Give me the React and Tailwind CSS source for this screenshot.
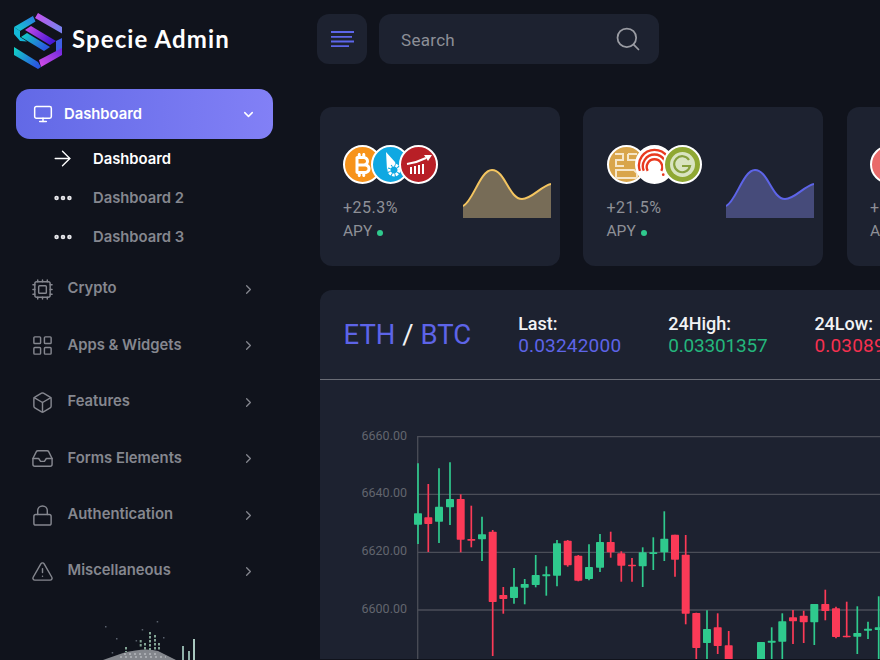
import React from 'react';
import {
  Monitor, ChevronDown, ChevronRight, ArrowRight, Ellipsis, Cpu, LayoutGrid, Box, Inbox, Lock, TriangleAlert, Search,
} from 'lucide-react';
import { FaBitcoinSign } from 'react-icons/fa6';

const UP = '#2fc98d';
const DOWN = '#fb3a57';

// x, wick top, wick bottom, body top, body bottom, up?  (page coordinates)
const candles = [
  [418, 464.3, 545, 514.3, 525.7, 1], [428.3, 485, 553, 518.3, 525, 0], [439, 469.3, 544, 507.7, 522.7, 1],
  [450, 463.3, 526, 500, 508.3, 1], [460.7, 495.3, 553.3, 500, 540.7, 0], [471.3, 506.7, 548.3, 540, 541.7, 0],
  [482, 517.7, 562, 535.3, 540.3, 1], [492.7, 531, 657, 532.7, 603, 0], [503.3, 588, 614.7, 596, 600, 0],
  [514, 569, 604.7, 587.7, 599, 1], [524.7, 580, 605.3, 585, 588.7, 1], [535.7, 556, 588.3, 576, 586, 1],
  [546.3, 567.3, 596.7, 575.3, 577.3, 1], [557, 541, 587.3, 544.3, 576.7, 1], [567.7, 541, 567.7, 541.7, 566.3, 0],
  [578.3, 556, 582.3, 556.7, 581.7, 0], [589, 545.3, 581.3, 568, 580, 1], [600, 535, 573, 543, 568.7, 1],
  [610.7, 532.7, 558.7, 543, 553.3, 0], [621.3, 552.3, 582.7, 554.3, 566.7, 0], [632, 559, 582.7, 565.7, 567.3, 0],
  [642.7, 548.3, 588, 553.3, 567.3, 1], [653.3, 538.3, 571, 553.3, 555, 1], [664.3, 512.3, 562, 539.7, 553.3, 1],
  [675, 535.7, 577.7, 535.7, 560.7, 0], [685.7, 536, 625.3, 555.7, 614.7, 0], [696.3, 613.7, 662, 614, 649, 0],
  [707, 611.3, 662, 630, 644, 1], [717.7, 614.3, 655, 628.3, 647, 0], [728.7, 632, 662, 646.3, 664, 0],
  [761, 643, 664, 643, 664, 1], [771.7, 628.3, 662, 641.7, 643.7, 1], [782.3, 614.3, 660, 622.3, 642.7, 1],
  [793, 611, 645, 618.3, 622.3, 0], [803.7, 611.7, 644, 616.7, 623.3, 0], [814.3, 605, 646, 605, 623.3, 1],
  [825.3, 590.7, 621.3, 605, 612, 0], [836, 607.7, 639.3, 609.3, 638, 0], [846.7, 602.7, 638.3, 636.7, 638.3, 0],
  [857.3, 607.3, 655, 634, 637.7, 1], [868, 622.7, 640, 629.7, 631.7, 1], [878.7, 597.3, 662, 628.3, 631, 1],
];

const gridLines = [[437.7, '6660.00'], [495.3, '6640.00'], [553.3, '6620.00'], [611, '6600.00']];

const menu = [
  { label: 'Crypto', Icon: Cpu },
  { label: 'Apps & Widgets', Icon: LayoutGrid },
  { label: 'Features', Icon: Box },
  { label: 'Forms Elements', Icon: Inbox },
  { label: 'Authentication', Icon: Lock },
  { label: 'Miscellaneous', Icon: TriangleAlert },
];

const Logo = () => (
  <svg width="52" height="60" viewBox="12 11 52 60" className="shrink-0">
    <defs>
      <linearGradient id="lgA" x1="0" y1="0" x2="1" y2="0.4"><stop offset="0" stopColor="#c94fee" /><stop offset="1" stopColor="#7c80ee" /></linearGradient>
      <linearGradient id="lgB" x1="0" y1="1" x2="1" y2="0"><stop offset="0" stopColor="#12d0d0" /><stop offset="1" stopColor="#2f6ae6" /></linearGradient>
      <linearGradient id="lgC" x1="0" y1="0" x2="1" y2="0.5"><stop offset="0" stopColor="#d04fe8" /><stop offset="1" stopColor="#4a18d8" /></linearGradient>
      <linearGradient id="lgD" x1="0" y1="0" x2="1" y2="0.5"><stop offset="0" stopColor="#10d6c4" /><stop offset="1" stopColor="#2a58e0" /></linearGradient>
      <linearGradient id="lgE" x1="0" y1="1" x2="1" y2="0"><stop offset="0" stopColor="#d84fe6" /><stop offset="1" stopColor="#6a28e0" /></linearGradient>
    </defs>
    <polygon points="38,13 62,27 62,33.5 35,18" fill="url(#lgA)" />
    <polygon points="38,13 14,27 20,31 35.5,21.5 33,16" fill="url(#lgB)" />
    <polygon points="14,27 20,31 20,37 27,41.5 20,41 14,34" fill="#14b8d8" />
    <polygon points="25,30 31,26 56,41 50,45" fill="url(#lgC)" />
    <polygon points="21,37 27,33 50,47 44,51" fill="url(#lgD)" />
    <polygon points="56,41 62,38 62,55 56,52" fill="#3f5fe6" />
    <polygon points="62,48 62,55 41,67 39,60" fill="url(#lgE)" />
    <polygon points="14,47 38,62 41,67 38,69 14,55" fill="url(#lgD)" />
  </svg>
);

const Coin = ({ color, first, children }) => (
  <div className={`w-[39px] h-[39px] rounded-full border-2 border-white flex items-center justify-center overflow-hidden shrink-0 ${first ? '' : 'ml-[-11px]'}`} style={{ background: color }}>
    {children}
  </div>
);

const Spark = ({ line, fill }) => (
  <svg width="88" height="50" viewBox="0 0 88 50" className="shrink-0 mt-[24px]">
    <path d="M0 37C10 33 17 1 29 1C42 1 46 30 59 30C69 30 78 17 88 15V49H0Z" fill={fill} />
    <path d="M0 37C10 33 17 1 29 1C42 1 46 30 59 30C69 30 78 17 88 15" fill="none" stroke={line} strokeWidth="2" />
  </svg>
);

const StatCard = ({ coins, change, line, fill }) => (
  <div className="w-[240px] h-[159px] shrink-0 rounded-xl bg-[#1d2230] pl-[23.5px] pr-[9px] pt-[38px] flex justify-between">
    <div>
      <div className="flex">{coins}</div>
      <div className="mt-[13px] text-[16px] leading-[22px] text-[#8e9097] font-['Roboto',sans-serif] tracking-[0.5px]">{change}</div>
      <div className="flex items-center gap-[5px] mt-[1px] text-[15.5px] leading-[22px] text-[#8e9097] font-['Roboto',sans-serif]">
        APY <span className="w-[6px] h-[6px] mt-[3px] rounded-full bg-[#2fc98d]" />
      </div>
    </div>
    {line && <Spark line={line} fill={fill} />}
  </div>
);

const Stat = ({ label, value, color, spacing = 'tracking-[0.2px]' }) => (
  <div className="font-['Roboto',sans-serif] shrink-0">
    <div className="text-[18px] leading-[22px] font-medium text-[#f1f2f4]">{label}</div>
    <div className={`text-[19px] leading-[22px] ${spacing}`} style={{ color }}>{value}</div>
  </div>
);

const Chart = () => (
  <svg width="560" height="279" viewBox="320 381 560 279" className="block">
    {gridLines.map(([y, label]) => (
      <g key={label}>
        <line x1="417.5" x2="880" y1={y} y2={y} stroke="#4b4e58" strokeWidth="1.3" />
        <text x="407" y={y + 3} textAnchor="end" fontSize="12.5" fill="#62656e" fontFamily="Roboto, sans-serif">{label}</text>
      </g>
    ))}
    <line x1="417.7" x2="417.7" y1="437" y2="660" stroke="#4b4e58" strokeWidth="1.3" />
    {candles.map(([x, wt, wb, bt, bb, up]) => {
      const c = up ? UP : DOWN;
      return (
        <g key={x}>
          <line x1={x} x2={x} y1={wt} y2={wb} stroke={c} strokeWidth="1.7" />
          <rect x={x - 4} y={bt} width="8" height={Math.max(bb - bt, 1.6)} rx="0.7" fill={c} />
        </g>
      );
    })}
  </svg>
);

const specks = [[5, 10], [16, 22], [41.7, 13], [35.6, 24], [63, 21], [56.7, 5], [11.7, 36]];
const columns = [[26, 31, 5], [40.7, 24, 8], [45, 27, 7], [50, 16, 18], [55, 19, 15], [59, 27, 7]];

const Art = () => (
  <svg width="110" height="44" viewBox="0 0 110 44" className="block ml-[100px] mt-[16px]">
    {specks.map(([x, y]) => <rect key={x} x={x} y={y} width="1.5" height="1.5" fill="#59606c" />)}
    <path d="M3 44L23 37Q45 31 58 35L70 41L76 44Z" fill="#83868c" />
    <path d="M20 41H66M24 38H58" stroke="#b4b6ba" strokeWidth="1.5" strokeDasharray="2 3" />
    {columns.map(([x, y, h]) => (
      <line key={x} x1={x} x2={x} y1={y} y2={y + h} stroke="#9fc9b2" strokeWidth="2" strokeDasharray="2.5 1.5" opacity="0.8" />
    ))}
    <rect x="82" y="30" width="2" height="14" fill="#8fb0a8" />
    <rect x="88" y="35" width="2" height="9" fill="#8fb0a8" />
    <rect x="93" y="23" width="2" height="21" fill="#a8c8bf" />
  </svg>
);

export default function App() {
  return (
    <div className="w-[880px] h-[660px] overflow-hidden flex bg-[#10131c] font-['Inter',sans-serif]">
      <aside className="w-[300px] shrink-0 overflow-hidden">
        <div className="flex items-center gap-[8px] pl-[12px] pt-[3px] h-[78px]">
          <Logo />
          <span className="text-[24px] leading-none font-bold tracking-[1.1px] text-white font-['Lato',sans-serif] mb-[3px]">Specie Admin</span>
        </div>

        <div className="ml-[16px] mt-[11px] w-[257px] h-[50px] rounded-[14px] bg-gradient-to-r from-[#6269e6] to-[#8280f6] flex items-center pl-[17px] pr-[17px] text-white">
          <Monitor size={20} strokeWidth={1.8} />
          <span className="ml-[11px] text-[14.8px] font-semibold flex-1">Dashboard</span>
          <ChevronDown size={15} strokeWidth={2.4} />
        </div>

        <div>
          {['Dashboard', 'Dashboard 2', 'Dashboard 3'].map((t, i) => (
            <div key={t} className={`h-[39.3px] flex items-center pl-[50px] text-[14.8px] font-semibold ${i === 0 ? 'text-white' : 'text-[#85878f]'}`}>
              <div className="w-[43px]">
                {i === 0
                  ? <ArrowRight size={25} strokeWidth={1.3} />
                  : <Ellipsis size={22} strokeWidth={3} className="text-[#e6e6ea] ml-[2px]" />}
              </div>
              {t}
            </div>
          ))}
        </div>

        <div className="mt-[4.5px]">
          {menu.map(({ label, Icon }) => (
            <div key={label} className="h-[56.4px] flex items-center pl-[31px] pr-[44px] text-[#85878f]">
              <Icon size={23} strokeWidth={1.5} />
              <span className="ml-[13.5px] text-[14.8px] font-semibold flex-1 mb-[2px]">{label}</span>
              <ChevronRight size={15} strokeWidth={2} />
            </div>
          ))}
        </div>

        <Art />
      </aside>

      <main className="flex-1 min-w-0">
        <header className="flex gap-[12px] pl-[17px] pt-[14px]">
          <button className="w-[50px] h-[50px] rounded-xl bg-[#1d2230] flex items-center justify-center">
            <svg width="24" height="18" viewBox="0 0 24 18" stroke="#5d66ea" strokeWidth="1.8">
              <path d="M1 2H24M1 6.8H22M1 11.5H24M1 16.2H19" />
            </svg>
          </button>
          <div className="w-[280px] h-[50px] rounded-xl bg-[#1d2230] flex items-center justify-between pl-[22px] pr-[17px] font-['Roboto',sans-serif]">
            <span className="text-[17px] leading-[24px] mt-[1px] text-[#8c8f97] tracking-[0.3px]">Search</span>
            <Search size={28} strokeWidth={1.5} className="text-[#9a9ca3]" />
          </div>
        </header>

        <div className="pl-[19.5px] pt-[43px]">
          <div className="flex gap-[23.5px]">
            <StatCard
              change="+25.3%"
              line="#f4c560"
              fill="#776c57"
              coins={
                <>
                  <Coin color="#f7931a" first><FaBitcoinSign size={24} className="text-white" /></Coin>
                  <Coin color="#0fa8e2">
                    <svg width="24" height="30" viewBox="0 0 24 30" fill="none">
                      <path d="M7 2L16 12C17 14 16 15 15 15C12 14 10 16 8 20Z" fill="#fff" />
                      <circle cx="15" cy="20" r="5" stroke="#fff" strokeWidth="3" strokeDasharray="2.5 1" />
                    </svg>
                  </Coin>
                  <Coin color="#b81f26">
                    <svg width="28" height="22" viewBox="0 0 28 22" fill="none" stroke="#fff">
                      <path d="M2 10C9 9 15 7 21 4" strokeWidth="2" />
                      <path d="M19 1L27 1L23 7Z" fill="#fff" strokeWidth="0" />
                      <path d="M6 13V20M10 12V20M14 11V20M18 10V20" strokeWidth="2" />
                    </svg>
                  </Coin>
                </>
              }
            />
            <StatCard
              change="+21.5%"
              line="#5d64e8"
              fill="#464b7a"
              coins={
                <>
                  <Coin color="#d9a54a" first>
                    <svg width="26" height="28" viewBox="0 0 26 28" fill="none" stroke="#f6e6c8" strokeWidth="2">
                      <path d="M2 3H10V9H3V15H11M15 3H24M15 3V9H24M3 19H21L24 22V27H3Z" />
                    </svg>
                  </Coin>
                  <Coin color="#fff">
                    <svg width="36" height="36" viewBox="0 0 36 36" fill="none" stroke="#e8391f" strokeWidth="2.4">
                      <path d="M3 24A16 16 0 1 1 33 24M7 24A12 12 0 1 1 29 24M11 24A8 8 0 1 1 25 24" />
                      <circle cx="27" cy="28" r="1.4" fill="#e8391f" strokeWidth="0" />
                    </svg>
                  </Coin>
                  <Coin color="#8fa832">
                    <div className="w-[25px] h-[25px] rounded-full bg-[#d9e4c0] flex items-center justify-center">
                      <svg width="19" height="19" viewBox="0 0 19 19" fill="none" stroke="#86a03c" strokeWidth="2.2">
                        <path d="M16 5A8 8 0 1 0 17 11H9" />
                      </svg>
                    </div>
                  </Coin>
                </>
              }
            />
            <StatCard change="+23.5%" coins={<Coin color="#e96a6a" first />} />
          </div>

          <section className="w-[700px] mt-[24px] rounded-t-xl bg-[#1d2230]">
            <div className="h-[90px] flex items-center pl-[24px] gap-[47px] border-b border-[#6a6d76]">
              <div className="text-[27.5px] leading-none font-['Roboto',sans-serif] text-[#5d64e8] shrink-0">
                ETH <span className="text-[#f1f2f4]">/</span> BTC
              </div>
              <Stat label="Last:" value="0.03242000" color="#5d64e8" />
              <Stat label="24High:" value="0.03301357" color="#24b67c" spacing="tracking-[-0.2px]" />
              <Stat label="24Low:" value="0.03089000" color="#f5304f" />
            </div>
            <Chart />
          </section>
        </div>
      </main>
    </div>
  );
}
